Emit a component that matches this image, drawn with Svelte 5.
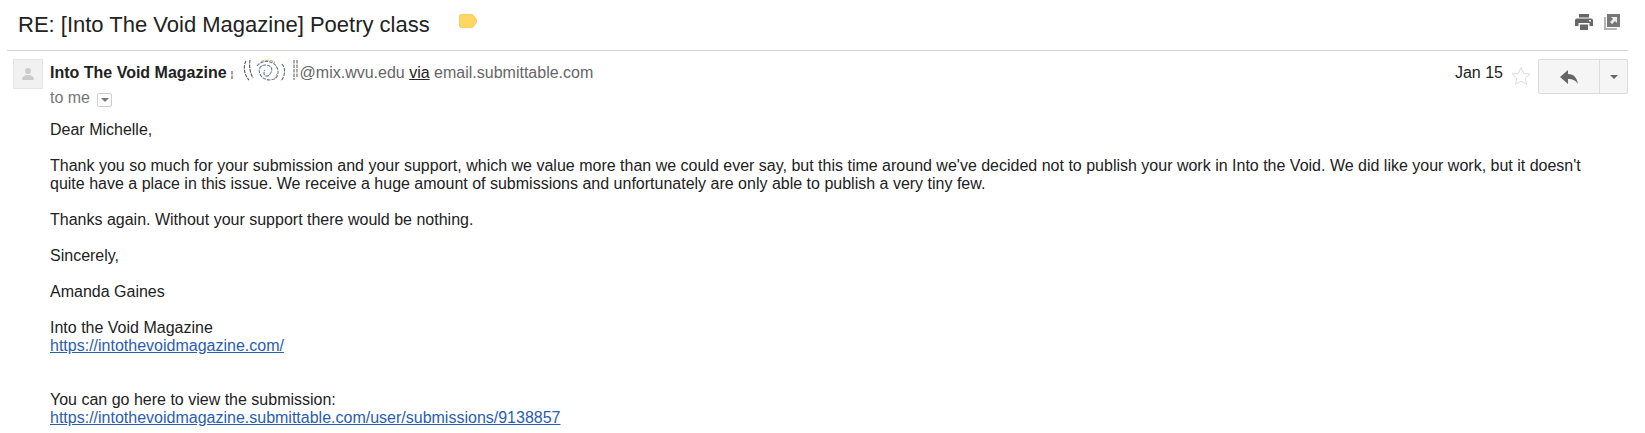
<script>
  const paragraphs = [
    "Dear Michelle,",
    "Thank you so much for your submission and your support, which we value more than we could ever say, but this time around we've decided not to publish your work in Into the Void. We did like your work, but it doesn't quite have a place in this issue. We receive a huge amount of submissions and unfortunately are only able to publish a very tiny few.",
    "Thanks again. Without your support there would be nothing.",
    "Sincerely,",
    "Amanda Gaines"
  ];
</script>

<div class="page">
  <header class="subject">
    <h1>RE: [Into The Void Magazine] Poetry class</h1>
    <svg class="tag" viewBox="0 0 18 14" width="18" height="14"><path d="M1.500.5h11l1.500.5 3.500 4.500v3L14 13l-1.500.5h-11l-1-1V1.500z" fill="#fdd663" stroke="#f6cf68" stroke-width="1"/></svg>
    <div class="tools">
      <svg viewBox="0 0 18 16" width="18" height="16"><path d="M4 0h10v3.500H4zM2 4.500h14a2 2 0 0 1 2 2V12h-3.500V9h-11v3H0V6.500a2 2 0 0 1 2-2zM5 10.500h8V16H5z" fill="#666"/><rect x="14" y="6" width="2" height="1.500" fill="#fff"/></svg>
      <svg viewBox="0 0 16 16" width="16" height="16"><path d="M3 0h13v13H3z" fill="#777"/><path d="M0 3h2v11h11v2H0z" fill="#b5b5b5"/><path d="M7 3h6v6l-2-2-3 3-2-2 3-3z" fill="#eee"/></svg>
    </div>
  </header>

  <main class="message">
    <div class="avatar">
      <svg viewBox="0 0 14 14" width="14" height="14"><circle cx="7" cy="4" r="3" fill="#ccc"/><path d="M1 13c0-3.500 2.500-5 6-5s6 1.500 6 5z" fill="#ccc"/></svg>
    </div>
    <div class="content">
      <div class="meta">
        <div class="who">
          <div class="from">
            <strong>Into The Void Magazine</strong>
            <svg class="scribble" viewBox="0 0 70 26" width="70" height="26" fill="none" stroke-width="1.100" stroke-dasharray="3.500 1">
              <path d="M2 13v8M16 3c-3 5-2 14 3 19M20 2c-1 6 0 13 3 18" stroke="#555"/>
              <path d="M27 8c6-8 20-5 21 5s-11 11-16 6-3-12 3-12 9 4 5 9-8 0-5-4" stroke="#5f7899"/>
              <path d="M52 6c4 5 3 12-1 17M64 2v20M67 2v18" stroke="#666"/>
              <path d="M31 4c5-3 11-2 14 1M44 22l3-6" stroke="#c7a77f"/>
            </svg><span class="addr">@mix.wvu.edu <u>via</u> email.submittable.com</span>
          </div>
          <div class="to">to me <span class="drop"><i></i></span></div>
        </div>
        <div class="actions">
          <span class="date">Jan 15</span>
          <svg class="star" viewBox="0 0 20 20" width="20" height="20"><path d="M10 1.500l2.600 5.800 6.300.7-4.700 4.200 1.300 6.200L10 15.200l-5.500 3.200 1.300-6.200L1.100 8l6.300-.7z" fill="#fff" stroke="#ddd"/></svg>
          <div class="reply">
            <button class="main" aria-label="Reply"><svg viewBox="0 0 18 14" width="18" height="14"><path d="M8 0v4c6 0 9 4 10 10-2-3.500-5-5-10-5v5L0 7z" fill="#666"/></svg></button>
            <button class="more" aria-label="More"><i></i></button>
          </div>
        </div>
      </div>
      <div class="body">
        {#each paragraphs as p}<p>{p}</p>{/each}
        <p>Into the Void Magazine<br /><a href="#top">https://intothevoidmagazine.com/</a></p>
        <p class="late">You can go here to view the submission:<br /><a href="#top">https://intothevoidmagazine.submittable.com/user/submissions/9138857</a></p>
      </div>
    </div>
  </main>
</div>

<style>
  :global(body) { margin: 0; background: #fff; }
  .page { width: 1645px; height: 433px; overflow: hidden; font-family: "Liberation Sans", Arial, sans-serif; font-size: 16px; line-height: 18px; color: #222; box-sizing: border-box; padding: 0 17px 0 7px; }
  .subject { display: flex; align-items: center; border-bottom: 1px solid #d8d8d8; padding-left: 11px; box-sizing: border-box; height: 51px; }
  h1 { margin: 0; font-size: 22px; font-weight: 400; line-height: 42px; height: 42px; color: #222; }
  .tag { margin-left: 29px; margin-bottom: 8px; }
  .tools { margin-left: auto; display: flex; gap: 11px; margin-right: 8px; margin-bottom: 7px; }
  .message { display: flex; padding: 8px 0 0 6px; }
  .avatar { width: 28px; height: 28px; background: #f1f1f1; border: 1px solid #e5e5e5; display: flex; align-items: center; justify-content: center; margin-right: 7px; flex: none; }
  .content { flex: 1; min-width: 0; }
  .meta { display: flex; justify-content: space-between; }
  .who { padding-top: 2px; }
  .from { display: flex; align-items: center; height: 24px; color: #666; }
  .from strong { color: #222; font-weight: 700; }
  .scribble { margin-left: 3px; margin-top: -4px; }
  .addr { color: #666; }
  .addr u { color: #222; }
  .to { color: #777; display: flex; align-items: center; gap: 7px; height: 26px; }
  .drop { width: 13px; height: 12px; border: 1px solid #ccc; border-radius: 2px; display: flex; align-items: center; justify-content: center; margin-top: 3px; }
  .drop i { border: 4px solid transparent; border-top: 4px solid #777; border-bottom: 0; }
  .actions { display: flex; align-items: flex-start; }
  .date { color: #222; margin-top: 2px; margin-right: -1px; line-height: 24px; }
  .star { margin: 7px 7px 0 9px; }
  .reply { display: flex; width: 90px; height: 35px; border: 1px solid #dcdcdc; border-radius: 2px; background: #f5f5f5; box-sizing: border-box; }
  .reply button { background: none; border: 0; padding: 0; display: flex; align-items: center; justify-content: center; }
  .main { flex: 1; border-right: 1px solid #dcdcdc !important; }
  .more { width: 27px; }
  .more i { border: 4px solid transparent; border-top: 4px solid #666; border-bottom: 0; }
  .body { margin-top: 10px; padding-right: 30px; }
  .body p { margin: 0 0 18px; }
  .late { padding-top: 18px; }
  a { color: #2a5db0; }
</style>
